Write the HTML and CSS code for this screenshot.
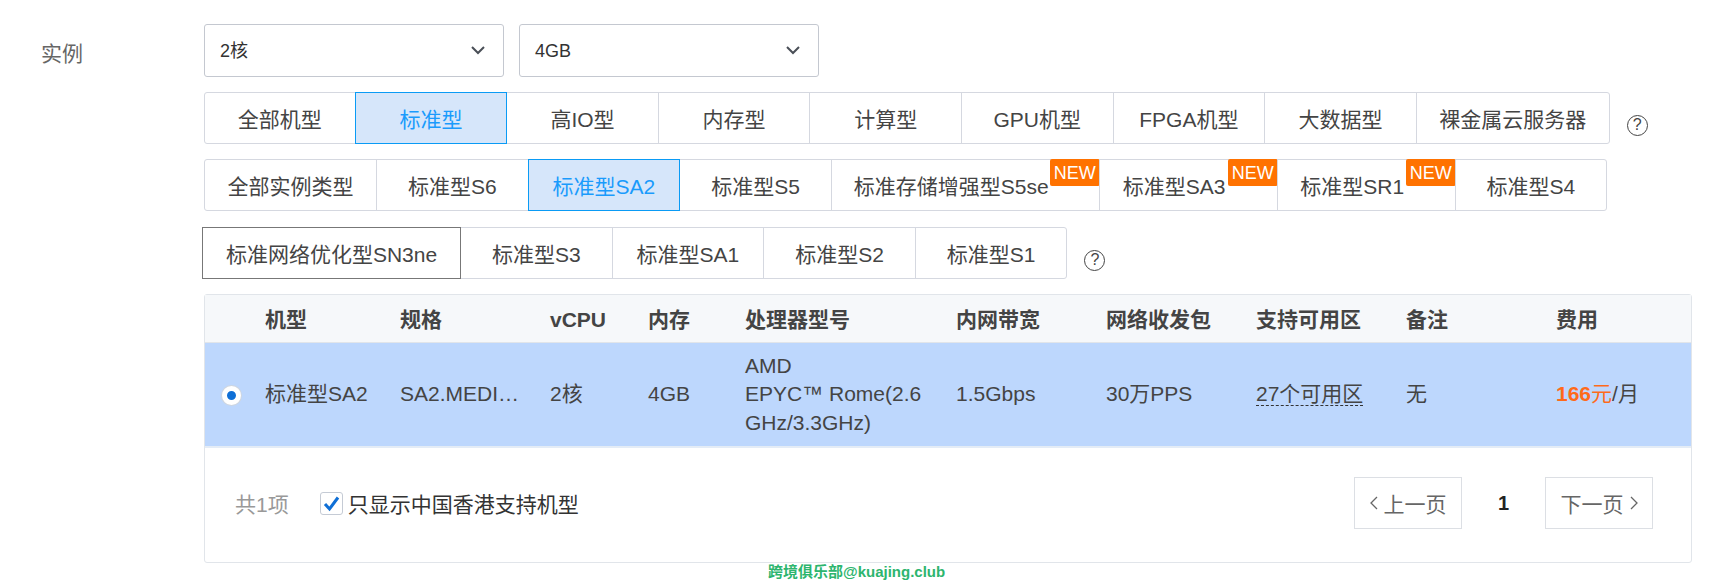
FILE: index.html
```html
<!DOCTYPE html>
<html lang="zh-CN">
<head>
    <meta charset="UTF-8">
    <title>实例</title>
    <link rel="stylesheet" href="styles.css">
</head>
<body>
    <div class="form-row">
        <div class="form-label">实例</div>
        <div class="form-body">
            <!-- CPU / memory -->
            <div class="selects">
                <div class="select">
                    <span>2核</span>
                    <svg class="chevron" width="14" height="9" viewBox="0 0 14 9"><path d="M1 1l6 6 6-6" fill="none" stroke="#4a4f57" stroke-width="2"/></svg>
                </div>
                <div class="select">
                    <span>4GB</span>
                    <svg class="chevron" width="14" height="9" viewBox="0 0 14 9"><path d="M1 1l6 6 6-6" fill="none" stroke="#4a4f57" stroke-width="2"/></svg>
                </div>
            </div>

            <!-- Instance families -->
            <div class="tab-row">
                <div class="tabs">
                    <div class="tab">全部机型</div>
                    <div class="tab active">标准型</div>
                    <div class="tab">高IO型</div>
                    <div class="tab">内存型</div>
                    <div class="tab">计算型</div>
                    <div class="tab">GPU机型</div>
                    <div class="tab">FPGA机型</div>
                    <div class="tab">大数据型</div>
                    <div class="tab">裸金属云服务器</div>
                </div>
                <span class="help">?</span>
            </div>

            <div class="tab-row tall-gap">
                <div class="tabs">
                    <div class="tab">全部实例类型</div>
                    <div class="tab">标准型S6</div>
                    <div class="tab active">标准型SA2</div>
                    <div class="tab">标准型S5</div>
                    <div class="tab has-badge">标准存储增强型S5se<span class="badge">NEW</span></div>
                    <div class="tab has-badge">标准型SA3<span class="badge">NEW</span></div>
                    <div class="tab has-badge">标准型SR1<span class="badge">NEW</span></div>
                    <div class="tab">标准型S4</div>
                </div>
            </div>

            <div class="tab-row">
                <div class="tabs shifted">
                    <div class="tab focused">标准网络优化型SN3ne</div>
                    <div class="tab">标准型S3</div>
                    <div class="tab">标准型SA1</div>
                    <div class="tab">标准型S2</div>
                    <div class="tab">标准型S1</div>
                </div>
                <span class="help">?</span>
            </div>

            <!-- Instance table -->
            <div class="panel">
                <table class="spec-table">
                    <colgroup>
                        <col class="col-radio">
                        <col class="col-type">
                        <col class="col-spec">
                        <col class="col-cpu">
                        <col class="col-mem">
                        <col class="col-proc">
                        <col class="col-net">
                        <col class="col-pps">
                        <col class="col-zone">
                        <col class="col-note">
                        <col class="col-price">
                    </colgroup>
                    <thead>
                        <tr>
                            <th></th>
                            <th>机型</th>
                            <th>规格</th>
                            <th>vCPU</th>
                            <th>内存</th>
                            <th>处理器型号</th>
                            <th>内网带宽</th>
                            <th>网络收发包</th>
                            <th>支持可用区</th>
                            <th>备注</th>
                            <th>费用</th>
                        </tr>
                    </thead>
                    <tbody>
                        <tr>
                            <td class="radio-cell"><span class="radio"></span></td>
                            <td>标准型SA2</td>
                            <td class="ellipsis">SA2.MEDIUM4</td>
                            <td>2核</td>
                            <td>4GB</td>
                            <td>AMD<br>EPYC™ Rome(2.6 GHz/3.3GHz)</td>
                            <td>1.5Gbps</td>
                            <td>30万PPS</td>
                            <td><span class="dashed">27个可用区</span></td>
                            <td>无</td>
                            <td><span class="price"><b>166</b>元</span>/月</td>
                        </tr>
                    </tbody>
                </table>

                <div class="table-foot">
                    <div class="foot-left">
                        <span class="total">共1项</span>
                        <label class="check">
                            <span class="check-box">
                                <svg width="19" height="19" viewBox="0 0 19 19"><path d="M3 10l4.500 5L16 3.500" fill="none" stroke="#0f6fd6" stroke-width="3"/></svg>
                            </span>
                            只显示中国香港支持机型
                        </label>
                    </div>
                    <div class="pager">
                        <div class="page-btn">
                            <svg width="8" height="14" viewBox="0 0 8 14"><path d="M7 1L1 7l6 6" fill="none" stroke="#666" stroke-width="1.300"/></svg>
                            上一页
                        </div>
                        <span class="page-num">1</span>
                        <div class="page-btn">
                            下一页
                            <svg width="8" height="14" viewBox="0 0 8 14"><path d="M1 1l6 6-6 6" fill="none" stroke="#666" stroke-width="1.300"/></svg>
                        </div>
                    </div>
                </div>
            </div>

            <div class="watermark">跨境俱乐部@kuajing.club</div>
        </div>
    </div>
</body>
</html>
```

FILE: styles.css
```css
body {
    font-family: "Liberation Sans", "Noto Sans CJK SC", sans-serif;
    font-size: 21px;
    color: #444;
    background-color: #fff;
    margin: 0;
    padding: 0;
}
.form-row {
    display: flex;
    padding-top: 24px;
}
.form-label {
    width: 163px;
    padding-left: 41px;
    padding-top: 13px;
    color: #666;
}
.form-body {
    width: 1488px;
}
.selects {
    display: flex;
    gap: 15px;
    margin-bottom: 15px;
}
.select {
    width: 300px;
    height: 53px;
    box-sizing: border-box;
    display: flex;
    align-items: center;
    justify-content: space-between;
    padding: 0 18px 0 15px;
    border: 1px solid #c4c8d0;
    border-radius: 3px;
    font-size: 18px;
    color: #333;
}
.select span {
    line-height: 24px;
    padding-top: 1px;
}
.tab-row {
    display: flex;
    align-items: center;
    margin-bottom: 15px;
}
.tab-row.tall-gap {
    margin-bottom: 16px;
}
.tabs {
    display: flex;
    height: 52px;
}
.tabs.shifted {
    margin-left: -2px;
}
.tab {
    position: relative;
    min-width: 152.600px;
    box-sizing: border-box;
    display: flex;
    align-items: center;
    justify-content: center;
    padding: 0 22.500px;
    margin-left: -1px;
    border: 1px solid #d5d8e0;
    white-space: nowrap;
    color: #444;
}
.tab:first-child {
    min-width: 151.600px;
    margin-left: 0;
    border-radius: 3px 0 0 3px;
}
.tab:last-child {
    border-radius: 0 3px 3px 0;
}
.tab.active {
    z-index: 1;
    background-color: #d6e6fa;
    border-color: #0a9bf5;
    color: #1a9bfc;
}
.tab.focused {
    z-index: 1;
    width: 259px;
    border-color: #777;
    border-radius: 0;
}
.tab.has-badge {
    min-width: 179px;
    padding-left: 22px;
    padding-right: 50px;
}
.badge {
    position: absolute;
    top: -1px;
    right: -1px;
    width: 50px;
    height: 27px;
    line-height: 28px;
    text-align: center;
    background-color: #ff7200;
    border-radius: 2px;
    color: #fff;
    font-size: 18px;
}
.help {
    width: 19px;
    height: 19px;
    margin: 14px 0 0 17px;
    display: flex;
    align-items: center;
    justify-content: center;
    border: 1.5px solid #444;
    border-radius: 50%;
    font-size: 16px;
    color: #444;
}
.panel {
    height: 269px;
    box-sizing: border-box;
    border: 1px solid #e1e5ea;
    border-radius: 3px;
}
.spec-table {
    width: 100%;
    table-layout: fixed;
    border-collapse: collapse;
}
.col-radio { width: 60px; }
.col-type { width: 135px; }
.col-spec { width: 150px; }
.col-cpu { width: 98px; }
.col-mem { width: 97px; }
.col-proc { width: 211px; }
.col-net { width: 150px; }
.col-pps { width: 150px; }
.col-zone { width: 150px; }
.col-note { width: 150px; }
.spec-table th {
    height: 45px;
    padding: 2px 15px 0 0;
    line-height: 28px;
    text-align: left;
    font-weight: bold;
    background-color: #f6f8fa;
    border-bottom: 1px solid #e1e5ea;
    color: #444;
}
.spec-table td {
    height: 103px;
    padding: 0 15px 0 0;
    line-height: 28.500px;
    background-color: #bdd7fd;
    border-bottom: 2px solid #e4ecf6;
}
.spec-table td.ellipsis {
    padding-right: 25px;
    overflow: hidden;
    white-space: nowrap;
    text-overflow: ellipsis;
}
.spec-table td.radio-cell {
    padding-right: 8px;
    text-align: center;
}
.radio {
    display: inline-block;
    width: 9px;
    height: 9px;
    background-color: #0f6fd6;
    border: 5px solid #fff;
    border-radius: 50%;
    box-shadow: 0 0 0 1px #cfd6e0;
    vertical-align: middle;
}
.dashed {
    border-bottom: 1px dashed #333;
}
.price {
    color: #ff6a1a;
}
.table-foot {
    display: flex;
    align-items: center;
    justify-content: space-between;
    padding: 29px 38px 0 30px;
}
.foot-left {
    display: flex;
    align-items: center;
    gap: 31px;
}
.total {
    color: #999;
}
.check {
    display: flex;
    align-items: center;
    gap: 5px;
    color: #333;
}
.check-box {
    width: 21px;
    height: 21px;
    display: flex;
    align-items: center;
    justify-content: center;
    background-color: #fff;
    border: 1px solid #c5cbd5;
    border-radius: 3px;
}
.pager {
    display: flex;
    align-items: center;
}
.page-btn {
    width: 108px;
    height: 52px;
    box-sizing: border-box;
    display: flex;
    align-items: center;
    justify-content: center;
    gap: 6px;
    border: 1px solid #dcdfe4;
    color: #666;
}
.page-num {
    width: 83px;
    text-align: center;
    font-weight: bold;
    font-size: 20px;
    color: #222;
}
.watermark {
    margin-top: -1px;
    padding-left: 564px;
    font-size: 15px;
    font-weight: bold;
    line-height: 20px;
    color: #2db56e;
}
```
